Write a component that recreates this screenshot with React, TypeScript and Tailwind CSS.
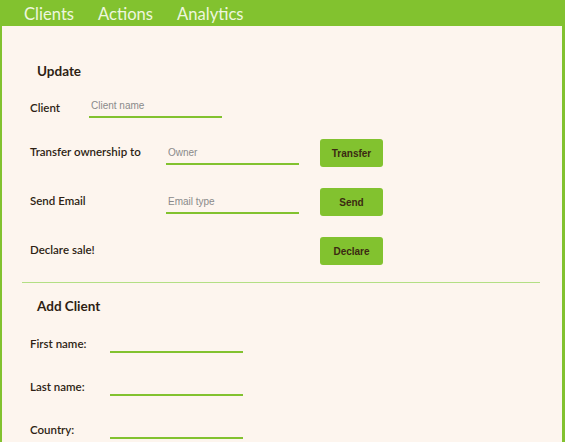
import React from "react";

const labelCls = "text-[11.5px] font-semibold text-[#2e1f14] [font-family:Lato,'Open_Sans',sans-serif]";
const inputCls =
  "h-[24px] w-[133px] bg-transparent border-0 border-b-2 border-[#82c22f] outline-none pl-[2px] text-[10px] text-[#333] placeholder:text-[#8a8a8a] [font-family:'Liberation_Sans',Arial,sans-serif]";
const btnCls =
  "h-[28px] w-[63px] rounded-[3px] bg-[#82c22f] text-[10px] font-bold text-[#3b2a12] [font-family:'Liberation_Sans',Arial,sans-serif]";

function Row({ label, placeholder, button }: { label: string; placeholder?: string; button: string }) {
  return (
    <div className="mt-[21px] flex h-[28px] items-center pl-[28px]">
      <div className={`w-[136px] pb-[3px] ${labelCls}`}>{label}</div>
      {placeholder ? (
        <input className={inputCls} placeholder={placeholder} />
      ) : (
        <div className="w-[133px]" />
      )}
      <button className={`ml-[21px] ${btnCls}`}>{button}</button>
    </div>
  );
}

function AddRow({ label, first }: { label: string; first?: boolean }) {
  return (
    <div className={`${first ? "mt-[13px]" : "mt-[19px]"} flex h-[24px] items-end pl-[28px]`}>
      <div className={`w-[80px] pb-[1px] ${labelCls}`}>{label}</div>
      <input className={inputCls} />
    </div>
  );
}

export default function App() {
  return (
    <div className="flex h-[442px] w-full flex-col overflow-hidden">
      <div className="flex h-[26px] shrink-0 items-center gap-[24px] bg-[#82c22f] pl-[24px] pt-[2px] text-[16.6px] text-[#eef6df] [font-family:Lato,'Open_Sans',sans-serif]">
        <span>Clients</span>
        <span>Actions</span>
        <span>Analytics</span>
      </div>
      <div className="flex-1 border-l-2 border-r-[3px] border-[#82c22f] bg-[#fdf5ee]">
        <div className="pl-[35px] pt-[35px] text-[13.5px] font-bold leading-[20px] text-[#2e1f14] [font-family:Lato,'Open_Sans',sans-serif]">
          Update
        </div>
        <div className="mt-[13px] flex h-[24px] items-center pl-[28px]">
          <div className={`w-[59px] pt-[3px] ${labelCls}`}>Client</div>
          <input className={inputCls} placeholder="Client name" />
        </div>
        <Row label="Transfer ownership to" placeholder="Owner" button="Transfer" />
        <Row label="Send Email" placeholder="Email type" button="Send" />
        <Row label="Declare sale!" button="Declare" />
        <div className="ml-[20px] mt-[17px] h-px w-[518px] bg-[#b3df84]" />
        <div className="pl-[35px] pt-[13px] text-[13.5px] font-bold leading-[20px] text-[#2e1f14] [font-family:Lato,'Open_Sans',sans-serif]">
          Add Client
        </div>
        <AddRow label="First name:" first />
        <AddRow label="Last name:" />
        <AddRow label="Country:" />
      </div>
    </div>
  );
}
